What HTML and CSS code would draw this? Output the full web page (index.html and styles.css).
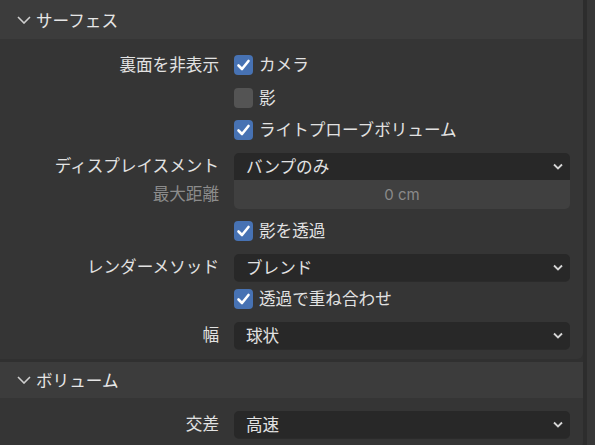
FILE: index.html
```html
<!DOCTYPE html>
<html lang="ja">
<head>
<meta charset="utf-8">
<link rel="stylesheet" href="styles.css">
</head>
<body>
<div class="region">
  <div class="panels">
    <section class="panel">
      <div class="panel-header">
        <svg class="hchev" width="14" height="8" viewBox="0 0 14 8"><path d="M1 1 L7 7 L13 1" fill="none" stroke="#cfcfcf" stroke-width="1.6"/></svg>
        <span>サーフェス</span>
      </div>
      <div class="panel-body">
        <div class="label">裏面を非表示</div>
        <div class="check"><span class="box on"><svg width="19" height="20" viewBox="0 0 19 20"><path d="M4.5 10.5 L8 14 L14.5 6" fill="none" stroke="#fff" stroke-width="2.6" stroke-linecap="round" stroke-linejoin="round"/></svg></span><span class="txt">カメラ</span></div>

        <div class="label"></div>
        <div class="check"><span class="box"></span><span class="txt">影</span></div>

        <div class="label"></div>
        <div class="check"><span class="box on"><svg width="19" height="20" viewBox="0 0 19 20"><path d="M4.5 10.5 L8 14 L14.5 6" fill="none" stroke="#fff" stroke-width="2.6" stroke-linecap="round" stroke-linejoin="round"/></svg></span><span class="txt">ライトプローブボリューム</span></div>

        <div class="label stack-labels"><div class="l1">ディスプレイスメント</div><div class="l2 dim">最大距離</div></div>
        <div class="stack">
          <div class="dropdown top"><span>バンプのみ</span><svg class="dchev" width="10" height="7" viewBox="0 0 10 7"><path d="M1 1.5 L5 5.5 L9 1.5" fill="none" stroke="#d6d6d6" stroke-width="1.8"/></svg></div>
          <div class="number">0 cm</div>
        </div>

        <div class="label"></div>
        <div class="check"><span class="box on"><svg width="19" height="20" viewBox="0 0 19 20"><path d="M4.5 10.5 L8 14 L14.5 6" fill="none" stroke="#fff" stroke-width="2.6" stroke-linecap="round" stroke-linejoin="round"/></svg></span><span class="txt">影を透過</span></div>

        <div class="label">レンダーメソッド</div>
        <div class="dropdown"><span>ブレンド</span><svg class="dchev" width="10" height="7" viewBox="0 0 10 7"><path d="M1 1.5 L5 5.5 L9 1.5" fill="none" stroke="#d6d6d6" stroke-width="1.8"/></svg></div>

        <div class="label tight"></div>
        <div class="check tight"><span class="box on"><svg width="19" height="20" viewBox="0 0 19 20"><path d="M4.5 10.5 L8 14 L14.5 6" fill="none" stroke="#fff" stroke-width="2.6" stroke-linecap="round" stroke-linejoin="round"/></svg></span><span class="txt">透過で重ね合わせ</span></div>

        <div class="label">幅</div>
        <div class="dropdown"><span>球状</span><svg class="dchev" width="10" height="7" viewBox="0 0 10 7"><path d="M1 1.5 L5 5.5 L9 1.5" fill="none" stroke="#d6d6d6" stroke-width="1.8"/></svg></div>
      </div>
    </section>

    <section class="panel">
      <div class="panel-header">
        <svg class="hchev" width="14" height="8" viewBox="0 0 14 8"><path d="M1 1 L7 7 L13 1" fill="none" stroke="#cfcfcf" stroke-width="1.6"/></svg>
        <span>ボリューム</span>
      </div>
      <div class="panel-body">
        <div class="label">交差</div>
        <div class="dropdown"><span>高速</span><svg class="dchev" width="10" height="7" viewBox="0 0 10 7"><path d="M1 1.5 L5 5.5 L9 1.5" fill="none" stroke="#d6d6d6" stroke-width="1.8"/></svg></div>
      </div>
    </section>
  </div>
  <div class="gutter"></div>
  <div class="scroll"></div>
</div>
</body>
</html>
```

FILE: styles.css
```css
html, body {
  margin: 0;
  padding: 0;
}
body {
  width: 595px;
  height: 445px;
  overflow: hidden;
  background: #303030;
  font-family: "Noto Sans CJK JP", "Noto Sans", sans-serif;
  font-size: 16.6px;
  color: #e2e2e2;
}
.region {
  display: flex;
  height: 445px;
}
.panels {
  width: 583px;
  display: flex;
  flex-direction: column;
  gap: 3px;
}
.gutter {
  width: 4px;
  background: #2d2d2d;
}
.scroll {
  width: 8px;
  background: #373737;
}
.panel {
  background: #353535;
  border-radius: 0 0 6px 0;
}
.panel-header {
  height: 36px;
  background: #3c3c3c;
  display: flex;
  align-items: center;
  padding-left: 17px;
  gap: 5px;
  color: #e6e6e6;
}
.panel:first-child .panel-header {
  height: 39px;
}
.hchev {
  flex: none;
}
.panel-body {
  display: grid;
  grid-template-columns: 219px 336px;
  column-gap: 15px;
  row-gap: 12.5px;
  padding: 16px 0 10px 0;
  align-items: center;
}
.panel:last-child .panel-body {
  padding-top: 13px;
}
.label {
  text-align: right;
  height: 20px;
  line-height: 18px;
  white-space: nowrap;
}
.stack-labels {
  display: flex;
  flex-direction: column;
  align-self: stretch;
  height: auto;
}
.dim {
  color: #8c8c8c;
}
.tight {
  margin-top: -4px;
}
.check {
  display: flex;
  align-items: center;
  gap: 6px;
  height: 20px;
  line-height: 18px;
}
.txt {
  padding-bottom: 2px;
}
.box {
  width: 19px;
  height: 20px;
  border-radius: 4px;
  background: #545454;
  flex: none;
  display: block;
}
.box.on {
  background: #4772b3;
}
.box svg {
  display: block;
}
.dropdown {
  height: 27px;
  background: #282828;
  border-radius: 5px;
  display: flex;
  align-items: center;
  justify-content: space-between;
  padding: 0 7px 0 12px;
  box-shadow: 0 1px 0 #2b2b2b;
}
.dropdown.top {
  border-radius: 5px 5px 0 0;
  height: 27px;
  box-shadow: none;
}
.stack-labels .l1 {
  height: 27px;
  line-height: 25px;
}
.stack-labels .l2 {
  height: 29px;
  line-height: 27px;
}
.number {
  height: 29px;
  background: #404040;
  border-radius: 0 0 5px 5px;
  color: #8a8a8a;
  font-family: Inter, "Noto Sans", sans-serif;
  font-size: 15px;
  text-align: center;
  line-height: 29px;
}
.dchev {
  flex: none;
}
```
